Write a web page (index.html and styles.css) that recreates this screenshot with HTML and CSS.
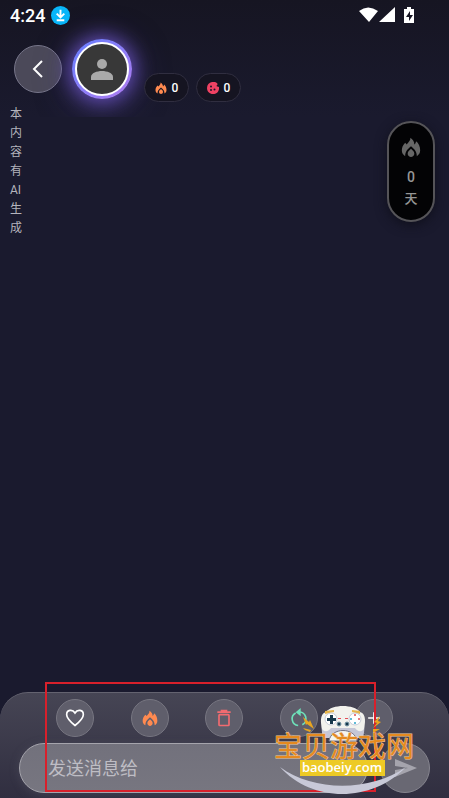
FILE: index.html
```html
<!DOCTYPE html>
<html lang="zh-CN">

<head>
    <meta charset="UTF-8">
    <meta name="viewport" content="width=device-width, initial-scale=1">
    <title>聊天</title>
    <link rel="stylesheet" href="styles.css">
</head>

<body>
    <!-- 公用图标 -->
    <svg class="defs" width="0" height="0" aria-hidden="true">
        <symbol id="fire" viewBox="0 0 24 24">
            <path fill="currentColor" d="M11 1c1 3-2 5-4 8L5 7c-3 3-4 6-4 9 0 3 1 5 4 7 0-5 2-8 7-12 5 4 7 7 7 12 3-2 4-4 4-7 0-5-2-9-5-11 0 2-1 3-2 4 0-4-2-6-5-8z" />
            <path fill="currentColor" d="M12 14c-2 2-4 3-4 6 0 2 2 4 4 4s4-2 4-4c0-3-2-4-4-6z" />
        </symbol>
    </svg>

    <header class="header">
        <!-- 状态栏 -->
        <div class="status">
            <span class="time">4:24</span>
            <svg class="download" viewBox="0 0 20 20">
                <circle cx="10" cy="10" r="10" fill="#08b6fa" />
                <path d="M10 4v7M6 8l4 4 4-4M6 15h8" fill="none" stroke="#fff" stroke-width="2" />
            </svg>
            <svg class="signal" viewBox="0 0 56 18">
                <path fill="#fff" d="M0 5Q9-2 19 5L10 16zM20 16 36 1v15zM45 3h3V1h4v2h3v14H45z" />
                <path fill="#171624" d="M51 5l-4 6h3v4l4-6h-3z" />
            </svg>
        </div>

        <!-- 顶部操作 -->
        <div class="topbar">
            <button class="round back" aria-label="返回">
                <svg width="24" height="24" viewBox="0 0 24 24">
                    <path d="M16 4 8 12l8 8" fill="none" stroke="#fff" stroke-width="2" />
                </svg>
            </button>
            <div class="avatar">
                <div class="face">
                    <svg width="32" height="32" viewBox="0 0 32 32" fill="#a9a9a9">
                        <circle cx="16" cy="11" r="5" />
                        <path d="M5 27v-3c0-4 6-6 11-6s11 2 11 6v3z" />
                    </svg>
                </div>
            </div>
            <div class="chips">
                <span class="chip"><svg class="hot" width="12" height="12">
                        <use href="#fire" />
                    </svg>0</span>
                <span class="chip"><svg width="12" height="12" viewBox="0 0 24 24">
                        <path fill="#ef4263" d="M10 0c2-1 10 0 11 4 0 2-2 3-2 4s3 1 5 2c1 8-4 14-12 14C5 24 0 19 0 12 0 6 4 1 10 0z" />
                        <g fill="#1a1828">
                            <circle cx="8" cy="9" r="2" />
                            <circle cx="8" cy="16" r="2" />
                            <circle cx="15" cy="15" r="2" />
                        </g>
                    </svg>0</span>
            </div>
        </div>
    </header>

    <main class="main">
        <p class="notice">本内容有<span>AI</span>生成</p>
        <div class="streak">
            <svg width="20" height="20">
                <use href="#fire" />
            </svg>
            <b>0</b>
            <span>天</span>
        </div>
    </main>

    <footer class="composer">
        <div class="tools">
            <button class="round tool" aria-label="喜欢">
                <svg width="20" height="20" viewBox="0 0 24 24">
                    <path d="M12 21C6 16 2 12 2 8c0-6 7-7 10-2 3-5 10-4 10 2 0 4-4 8-10 13z" fill="none" stroke="#fff" stroke-width="2" />
                </svg>
            </button>
            <button class="round tool hot" aria-label="热度">
                <svg width="16" height="16">
                    <use href="#fire" />
                </svg>
            </button>
            <button class="round tool" aria-label="删除">
                <svg width="20" height="20" viewBox="0 0 24 24" fill="none" stroke="#f16b70" stroke-width="2">
                    <path d="M4 5h16M8 3h8" />
                    <rect x="6" y="8" width="12" height="13" rx="1" />
                </svg>
            </button>
            <button class="round tool" aria-label="重置">
                <svg width="20" height="20" viewBox="0 0 24 24" fill="none" stroke="#6ee0b9" stroke-width="2">
                    <path d="M11 5a8 8 0 0 1 5 15M8 6a8 8 0 0 0 3 15" />
                    <path fill="#6ee0b9" stroke="none" d="M14 0v10L8 5z" />
                </svg>
            </button>
            <button class="round tool" aria-label="更多">
                <svg width="20" height="20" viewBox="0 0 24 24">
                    <path d="M12 5v14M5 12h14" stroke="#fff" stroke-width="2" />
                </svg>
            </button>
        </div>
        <form class="send">
            <input type="text" placeholder="发送消息给" aria-label="发送消息给">
            <button class="round submit" type="button" aria-label="发送">
                <svg width="24" height="24" viewBox="0 0 24 24">
                    <path d="M2 3v7l13 2-13 2v7l22-9z" fill="#a5a4ad" />
                </svg>
            </button>
        </form>

        <div class="mark"></div>

        <!-- 水印 -->
        <svg class="watermark" width="144" height="92" viewBox="0 0 144 92">
            <!-- 手柄 -->
            <path fill="#c5c6d6" d="M53 14 62 6h18l9 8c4 6 4 12 2 21H51c-2-9-2-15 2-21z" />
            <path fill="#f2f2ed" d="M54 9C60 1 82 1 88 9c7 2 5 12 4 17-3 4-7 2-9-1H59c-2 3-6 5-9 1-1-5-3-15 4-17z" />
            <path fill="#f5f5f0" stroke="#737384" d="M57 38c2-14 26-14 28 0z" />
            <path fill="#e6b54c" d="M53 8l9-1v2l-9 2zM80 7l8 1v3l-8-2z" />
            <g fill="#fff" stroke="#c8ccd8">
                <circle cx="59" cy="16" r="6" />
                <circle cx="83" cy="16" r="6" />
            </g>
            <path fill="#17384b" d="M58 12h3v3h3v3h-3v3h-3v-3h-3v-3h3z" />
            <g fill="#e24d55">
                <circle cx="83" cy="12" r="1" />
                <circle cx="87" cy="16" r="1" />
                <path d="M66 15h3v1h-3zM73 15h3v1h-3z" />
            </g>
            <g fill="#2aa5c9">
                <circle cx="79" cy="16" r="1" />
                <circle cx="83" cy="20" r="1" />
            </g>
            <g fill="#17384b" stroke="#7d9cac">
                <circle cx="67" cy="21" r="2" />
                <circle cx="75" cy="21" r="2" />
            </g>
            <!-- 闪电 -->
            <path fill="#e8a51f" d="M31 14l6 5 1-2 4 9-7-5-1 1zM31 25l8 2-1 2-5-2zM108 13l-6 6 3 1-4 5 8-6-3-1zM101 26l7 0-7 4z" />
            <!-- 文字 -->
            <path fill="#c8c9d8" d="M8 64c34 25 90 25 126 0-34 36-94 36-126 0z" />
            <rect x="28" y="57" width="85" height="16" fill="#edca25" />
            <text class="wm-name" x="2" y="54">宝贝游戏网</text>
            <text class="wm-url" x="70" y="69" text-anchor="middle">baobeiy.com</text>
        </svg>
    </footer>
</body>

</html>
```
FILE: styles.css
```css
* {
    margin: 0;
    padding: 0;
    box-sizing: border-box;
}

body {
    display: flex;
    flex-direction: column;
    min-height: 100vh;
    background: #1a1a2e;
    color: #fff;
    font-family: Roboto, "Noto Sans CJK SC", sans-serif;
}

svg {
    display: block;
}

.defs {
    position: absolute;
}

.hot {
    color: #ff8a50;
}

/* 圆形按钮 */
.round {
    display: flex;
    flex: none;
    align-items: center;
    justify-content: center;
    border: 1px solid #77768a;
    border-radius: 50%;
    background: #4b4959;
}

/* 顶部 */
.header {
    height: 117px;
    overflow: hidden;
    background: linear-gradient(#161522, #1a1a2e);
}

.status {
    display: flex;
    align-items: center;
    height: 30px;
    padding: 0 34px 0 10px;
}

.time {
    font-size: 18px;
    font-weight: 500;
}

.download {
    width: 19px;
    height: 19px;
    margin-left: 6px;
}

.signal {
    width: 56px;
    height: 18px;
    margin-left: auto;
}

.topbar {
    display: flex;
    align-items: center;
    padding: 9px 14px;
}

.back {
    width: 48px;
    height: 48px;
}

.avatar {
    width: 60px;
    height: 60px;
    margin: 0 12px 0 10px;
    padding: 3px;
    border-radius: 50%;
    background: linear-gradient(135deg, #667eff, #b07cf0);
    box-shadow: 0 0 20px 2px #6750bd, 0 6px 34px 2px #51419a80;
}

.face {
    display: flex;
    align-items: center;
    justify-content: center;
    height: 54px;
    border: 2px solid #fff;
    border-radius: 50%;
    background: #383838;
}

.chips {
    display: flex;
    align-self: flex-end;
    gap: 7px;
    margin-bottom: -3px;
}

.chip {
    display: flex;
    align-items: center;
    justify-content: center;
    gap: 5px;
    width: 45px;
    height: 29px;
    border: 1px solid #302e40;
    border-radius: 15px;
    background: #151421;
    font-size: 12px;
    font-weight: 500;
}

/* 内容区 */
.main {
    display: flex;
    flex: 1;
    align-items: flex-start;
    justify-content: space-between;
    padding: 4px 14px 0 10px;
}

.notice {
    width: 12px;
    margin-top: -16px;
    color: #b4b4bd;
    font-size: 12px;
    line-height: 19px;
    word-break: break-all;
}

.notice span {
    display: block;
    white-space: nowrap;
}

.streak {
    display: flex;
    flex-direction: column;
    align-items: center;
    width: 48px;
    height: 101px;
    padding-top: 14px;
    border: 2px solid #555458;
    border-radius: 24px;
    background: #030305;
    box-shadow: 0 3px 12px #10101c;
    color: #666;
}

.streak b,
.streak span {
    color: #969696;
    font-size: 14px;
    font-weight: 500;
    line-height: 22px;
}

.streak b {
    margin-top: 9px;
}

.streak span {
    font-size: 13px;
}

/* 底部输入 */
.composer {
    position: relative;
    padding: 6px 19px 5px;
    border-top: 1px solid #646370;
    border-radius: 28px 28px 0 0;
    background: linear-gradient(#464554, #302e40);
}

.tools {
    display: grid;
    grid-template-columns: repeat(5, 1fr);
    justify-items: center;
    padding: 0 19px;
}

.tool {
    width: 38px;
    height: 38px;
    border-color: #777681;
    background: #5f5e6b;
}

.send {
    display: flex;
    gap: 12px;
    margin-top: 6px;
}

.send input {
    flex: 1;
    min-width: 0;
    height: 50px;
    padding: 0 28px;
    border: 1px solid #a5a4ac;
    border-radius: 25px;
    outline: none;
    background: linear-gradient(#72717c, #777680);
    box-shadow: 0 2px 10px #5b596866;
    color: #fff;
    font: 18px Roboto, "Noto Sans CJK SC", sans-serif;
}

.send input::placeholder {
    color: #bebdc4;
}

.submit {
    width: 50px;
    height: 50px;
    border-color: #85848e;
    background: #696873;
}

/* 红框标注 */
.mark {
    position: absolute;
    top: -11px;
    right: 73px;
    bottom: 6px;
    left: 45px;
    border: 2px solid #d8202b;
    pointer-events: none;
}

.watermark {
    position: absolute;
    right: 33px;
    bottom: 3px;
    pointer-events: none;
}

.wm-name {
    fill: #e58a1f;
    stroke: #efc79a;
    stroke-width: 1px;
    paint-order: stroke;
    font: 400 28px "Noto Sans CJK SC", sans-serif;
}

.wm-url {
    fill: #fff;
    font: 600 13px "Open Sans", sans-serif;
}
```
